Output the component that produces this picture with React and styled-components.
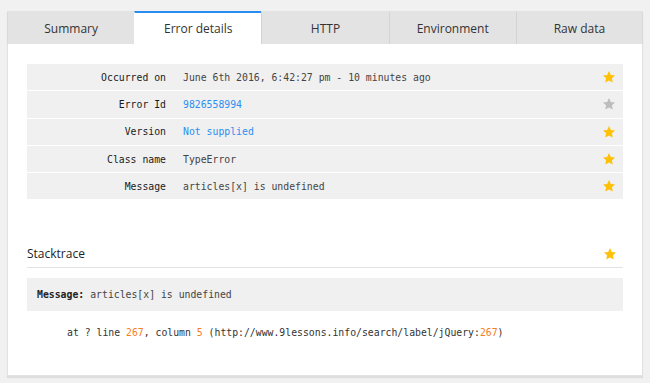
import React from 'react'
import styled, { createGlobalStyle } from 'styled-components'

const GlobalStyle = createGlobalStyle`
  html, body {
    margin: 0;
    padding: 0;
    background: #f1f1f1;
  }
  body {
    font-family: "Open Sans", "Noto Sans", sans-serif;
  }
`

const tabs = ['Summary', 'Error details', 'HTTP', 'Environment', 'Raw data']

const details = [
  { label: 'Occurred on', value: 'June 6th 2016, 6:42:27 pm - 10 minutes ago', starred: true },
  { label: 'Error Id', value: '9826558994', link: true, starred: false },
  { label: 'Version', value: 'Not supplied', link: true, starred: true },
  { label: 'Class name', value: 'TypeError', starred: true },
  { label: 'Message', value: 'articles[x] is undefined', starred: true },
]

function Star({ on }) {
  return (
    <StarIcon viewBox="0 0 24 24" $on={on}>
      <path d="M12 1.8l3.1 6.6 7.2.9-5.3 5 1.4 7.1L12 17.9l-6.4 3.5 1.4-7.1-5.3-5 7.2-.9z" />
    </StarIcon>
  )
}

export default function App() {
  return (
    <>
      <GlobalStyle />
      <Page>
        <Panel>
          <TabBar>
            {tabs.map((t) => (
              <Tab key={t} $active={t === 'Error details'}>{t}</Tab>
            ))}
          </TabBar>
          <Body>
            <DetailTable>
              {details.map((d) => (
                <DetailRow key={d.label}>
                  <Label>{d.label}</Label>
                  <Value $link={d.link}>{d.value}</Value>
                  <Star on={d.starred} />
                </DetailRow>
              ))}
            </DetailTable>

            <SectionHead>
              <SectionTitle>Stacktrace</SectionTitle>
              <Star on />
            </SectionHead>
            <MessageBox>
              <b>Message:</b> articles[x] is undefined
            </MessageBox>
            <TraceLine>
              at ? line <Num>267</Num>, column <Num>5</Num> (http://www.9lessons.info/search/label/jQuery:<Num>267</Num>)
            </TraceLine>
          </Body>
        </Panel>
      </Page>
    </>
  )
}

const Page = styled.div`
  padding: 11px 7px 0 7px;
  height: 383px;
  box-sizing: border-box;
`
const Panel = styled.div`
  background: #fff;
  border: 1px solid #e2e2e2;
  border-top: none;
  box-shadow: 0 2px 1px rgba(0, 0, 0, 0.08);
  height: 365px;
  box-sizing: border-box;
`
const TabBar = styled.div`
  display: grid;
  grid-template-columns: repeat(5, 1fr);
  height: 33px;
  margin: 0 -1px;
`
const Tab = styled.div`
  display: flex;
  align-items: center;
  justify-content: center;
  font-size: 12px;
  color: #333;
  background: ${(p) => (p.$active ? '#fff' : '#e3e3e3')};
  border-top: 2px solid ${(p) => (p.$active ? '#2a8cf0' : '#e3e3e3')};
  border-left: 1px solid ${(p) => (p.$active ? '#fff' : '#d3d3d3')};
  box-sizing: border-box;
  padding-bottom: 1px;
  &:first-child {
    border-left-color: #dadada;
  }
  &:last-child {
    border-right: 1px solid #dadada;
  }
`
const Body = styled.div`
  padding: 20px 19px 0 19px;
`
const DetailTable = styled.div`
  display: flex;
  flex-direction: column;
  gap: 1px;
`
const DetailRow = styled.div`
  display: grid;
  grid-template-columns: 139px 1fr auto;
  column-gap: 17px;
  align-items: center;
  height: 26.3px;
  padding-right: 7px;
  background: #f0f0f0;
  font-family: "DejaVu Sans Mono", "Liberation Mono", monospace;
  font-size: 9.8px;
`
const Label = styled.div`
  text-align: right;
  color: #1a1a1a;
`
const Value = styled.div`
  color: ${(p) => (p.$link ? '#2b8ff2' : '#444')};
`
const StarIcon = styled.svg`
  width: 14px;
  height: 14px;
  fill: ${(p) => (p.$on ? '#ffc107' : '#bdbdbd')};
  display: block;
`
const SectionHead = styled.div`
  display: flex;
  align-items: center;
  justify-content: space-between;
  margin-top: 46px;
  padding: 0 6px 5px 0;
  border-bottom: 1px solid #e3e3e3;
`
const SectionTitle = styled.div`
  font-size: 12px;
  color: #222;
`
const MessageBox = styled.div`
  margin-top: 10px;
  height: 33px;
  display: flex;
  align-items: center;
  gap: 6px;
  padding-left: 10px;
  background: #f0f0f0;
  font-family: "DejaVu Sans Mono", "Liberation Mono", monospace;
  font-size: 9.8px;
  color: #444;
  b {
    color: #222;
  }
`
const TraceLine = styled.div`
  margin-top: 16px;
  padding-left: 40px;
  font-family: "DejaVu Sans Mono", "Liberation Mono", monospace;
  font-size: 9.8px;
  color: #333;
`
const Num = styled.span`
  color: #f57d22;
`
